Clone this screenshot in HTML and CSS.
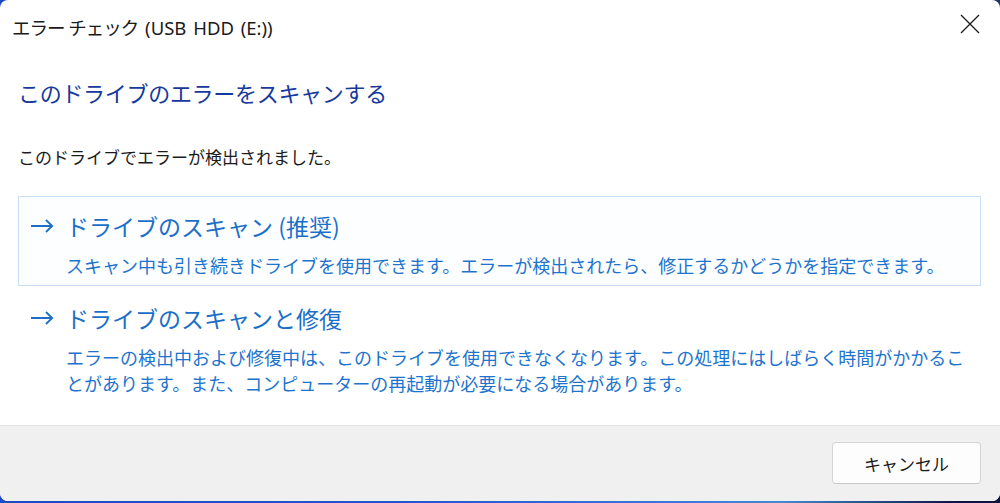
FILE: index.html
```html
<!DOCTYPE html>
<html lang="ja">
<head>
<meta charset="utf-8">
<title>エラー チェック</title>
<link rel="stylesheet" href="styles.css">
</head>
<body>
<div class="window">
  <div class="titlebar">
    <div class="title"><span class="jp">エラー チェック</span> (USB HDD (E:))</div>
    <svg class="close" width="20" height="20" viewBox="0 0 20 20"><path d="M1 1L19 19M19 1L1 19" stroke="#1a1a1a" stroke-width="1.3" fill="none"/></svg>
  </div>
  <div class="content">
    <h1 class="heading">このドライブのエラーをスキャンする</h1>
    <p class="message">このドライブでエラーが検出されました。</p>
    <div class="option option-hover">
      <svg class="arrow" width="24" height="14" viewBox="0 0 24 14"><path d="M1 7H22M16 1L22.2 7L16 13" stroke="#1b6fc8" stroke-width="1.8" fill="none"/></svg>
      <div class="option-text">
        <div class="option-title">ドライブのスキャン (推奨)</div>
        <div class="option-desc">スキャン中も引き続きドライブを使用できます。エラーが検出されたら、修正するかどうかを指定できます。</div>
      </div>
    </div>
    <div class="option">
      <svg class="arrow" width="24" height="14" viewBox="0 0 24 14"><path d="M1 7H22M16 1L22.2 7L16 13" stroke="#1b6fc8" stroke-width="1.8" fill="none"/></svg>
      <div class="option-text">
        <div class="option-title">ドライブのスキャンと修復</div>
        <div class="option-desc">エラーの検出中および修復中は、このドライブを使用できなくなります。この処理にはしばらく時間がかかるこ<br>とがあります。また、コンピューターの再起動が必要になる場合があります。</div>
      </div>
    </div>
  </div>
  <div class="footer">
    <button class="btn">キャンセル</button>
  </div>
</div>
</body>
</html>
```

FILE: styles.css
```css
* { box-sizing: border-box; }
html, body { margin: 0; padding: 0; }
body {
  width: 1000px;
  height: 503px;
  overflow: hidden;
  background: linear-gradient(100deg, #1c47c6 0%, #1f56cf 45%, #3f8ad8 80%, #0c1442 96%);
  font-family: "Noto Sans", "Noto Sans CJK JP", sans-serif;
}
.window {
  width: 1000px;
  height: 501px;
  background: #ffffff;
  border-radius: 8px;
  overflow: hidden;
  display: flex;
  flex-direction: column;
}
.titlebar {
  height: 56px;
  display: flex;
  justify-content: space-between;
  align-items: center;
  padding-left: 12px;
}
.title {
  font-size: 18.5px;
  line-height: 24px;
  color: #1a1a1a;
  word-spacing: 2px;
}
.title .jp { letter-spacing: -1px; word-spacing: 0; }
.close {
  align-self: flex-start;
  margin-top: 14px;
  margin-right: 20px;
}
.content {
  flex: 1;
  padding: 0 19px 0 18px;
}
.heading {
  margin: 21px 0 0 0;
  font-size: 22px;
  line-height: 30px;
  font-weight: normal;
  letter-spacing: -0.3px;
  color: #17399c;
  font-family: "Noto Sans CJK JP", sans-serif;
}
.message {
  margin: 38px 0 0 0;
  font-size: 17px;
  line-height: 24px;
  color: #1b1b1b;
  font-family: "Noto Sans CJK JP", sans-serif;
}
.option {
  margin-top: 27px;
  border: 1px solid transparent;
  padding: 14px 0 7px 11px;
  display: flex;
  align-items: flex-start;
  height: 90px;
}
.option + .option {
  margin-top: 2px;
  height: auto;
}
.option-hover {
  border-color: #c6dff6;
  background: #fcfeff;
}
.arrow {
  flex: none;
  margin-top: 8px;
  margin-right: 12px;
}
.option-text {
  color: #1b6fc8;
  font-family: "Noto Sans CJK JP", sans-serif;
}
.option-title {
  font-size: 23px;
  line-height: 30px;
}
.option-desc {
  margin-top: 11px;
  font-size: 18px;
  line-height: 26px;
  white-space: nowrap;
  color: #1e74cc;
}
.footer {
  height: 76px;
  flex: none;
  background: #f0f0f0;
  border-top: 1px solid #e2e2e2;
  display: flex;
  justify-content: flex-end;
  align-items: flex-start;
  padding: 16px 19px 0 0;
}
.btn {
  width: 149px;
  height: 42px;
  background: #fdfdfd;
  border: 1px solid #d4d4d4;
  border-bottom-color: #c8c8c8;
  border-radius: 4px;
  font-family: "Noto Sans CJK JP", sans-serif;
  font-size: 17px;
  color: #1a1a1a;
  padding: 0;
}
```
